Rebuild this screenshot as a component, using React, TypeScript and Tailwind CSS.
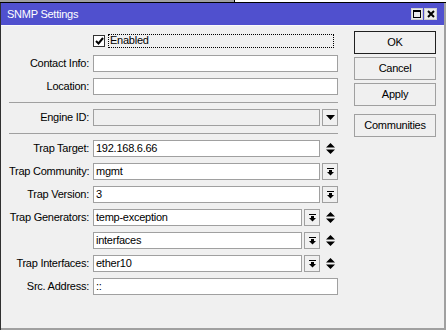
import type { ReactNode } from "react";

const UpDown = () => (
  <svg width="9" height="11" viewBox="0 0 9 11">
    <path d="M0 4.5 L4.5 0 L9 4.5Z M0 6.5 L9 6.5 L4.5 11Z" fill="#000" />
  </svg>
);

const BarDown = () => (
  <svg width="7" height="8" viewBox="0 0 7 8">
    <rect x="0" y="0" width="7" height="1" fill="#000" />
    <rect x="2" y="2" width="3" height="2" fill="#000" />
    <path d="M0 4 L7 4 L3.5 7.5Z" fill="#000" />
  </svg>
);

const DropDown = () => (
  <svg width="9" height="5" viewBox="0 0 9 5">
    <path d="M0 0 L9 0 L4.5 5Z" fill="#000" />
  </svg>
);

function Row({ label, children }: { label?: string; children: ReactNode }) {
  return (
    <div className="flex h-[17px] items-center">
      <div className="w-[80px] text-right whitespace-nowrap">{label ? `${label}:` : ""}</div>
      <div className="ml-[4px] flex h-full flex-1">{children}</div>
    </div>
  );
}

function Field({ value, disabled }: { value?: string; disabled?: boolean }) {
  return (
    <div
      className={`flex h-full flex-1 items-center border border-[#a0a0a0] px-[2px] leading-none ${
        disabled ? "bg-[#f0f0f0]" : "bg-white"
      }`}
    >
      {value}
    </div>
  );
}

function SmallBtn({ children }: { children: ReactNode }) {
  return (
    <div className="h-full w-[18px] pl-[2px]">
      <div className="flex h-full items-center justify-center border border-[#a0a0a0] bg-[#f0f0f0]">
        {children}
      </div>
    </div>
  );
}

function Arrows() {
  return (
    <div className="flex h-full w-[18px] items-center justify-center pl-[3px]">
      <UpDown />
    </div>
  );
}

function Sep() {
  return <div className="h-[2px] border-b border-[#a0a0a0]" />;
}

function Btn({ children, def, className = "" }: { children: ReactNode; def?: boolean; className?: string }) {
  return (
    <div
      className={`flex h-[23px] items-center justify-center border bg-[#f0f0f0] ${
        def ? "border-[#202020]" : "border-[#a0a0a0]"
      } ${className}`}
    >
      {children}
    </div>
  );
}

export default function App() {
  return (
    <div className="flex h-[330px] w-[446px] flex-col overflow-hidden bg-white font-['Liberation_Sans',Arial,sans-serif] text-[11px] tracking-[-0.25px] text-black">
      {/* strip of the window behind */}
      <div className="flex h-[3px]">
        <div className="w-[234px] border-b border-black bg-[#a0a0a0]" />
        <div className="w-[1px] bg-black" />
        <div className="flex-1 border-b border-black bg-white" />
      </div>

      <div className="flex flex-1 flex-col border-l border-r-2 border-l-[#303030] border-r-[#a0a0a0]">
        {/* title bar */}
        <div className="flex h-[22px] items-center justify-between bg-[#5050ce] pl-[6px] pr-[7px]">
          <span className="text-white">SNMP Settings</span>
          <div className="flex gap-[1px]">
            <div className="flex h-[12px] w-[12px] items-center justify-center border border-[#d0d0d0] bg-[#ececec]">
              <div className="h-[8px] w-[8px] border border-t-2 border-black" />
            </div>
            <div className="flex h-[12px] w-[13px] items-center justify-center border border-[#d0d0d0] bg-[#ececec]">
              <svg width="8" height="8" viewBox="0 0 8 8">
                <path d="M1 1 L7 7 M7 1 L1 7" stroke="#000" strokeWidth="2" />
              </svg>
            </div>
          </div>
        </div>
        <div className="h-[1px] bg-[#fafafa]" />

        {/* body */}
        <div className="flex flex-1 border-b-2 border-[#a0a0a0] bg-[#f0f0f0] pl-[8px] pr-[7px]">
          <div className="flex w-[329px] flex-col gap-[6px] pt-[6px]">
            <div className="flex h-[17px] items-center">
              <div className="w-[84px]" />
              <div className="flex h-[12px] w-[12px] items-center justify-center border border-[#333] bg-white">
                <svg width="9" height="8" viewBox="0 0 9 8">
                  <path d="M1 4 L3.5 6.5 L8 1" stroke="#000" strokeWidth="2" fill="none" />
                </svg>
              </div>
              <div className="ml-[3px] mr-[4px] flex h-[14px] flex-1 items-center border border-dotted border-black pl-[1px] leading-none">
                Enabled
              </div>
            </div>

            <Row label="Contact Info">
              <Field />
            </Row>
            <Row label="Location">
              <Field />
            </Row>
            <Sep />
            <Row label="Engine ID">
              <Field disabled />
              <SmallBtn>
                <DropDown />
              </SmallBtn>
            </Row>
            <Sep />
            <Row label="Trap Target">
              <Field value="192.168.6.66" />
              <Arrows />
            </Row>
            <Row label="Trap Community">
              <Field value="mgmt" />
              <SmallBtn>
                <BarDown />
              </SmallBtn>
            </Row>
            <Row label="Trap Version">
              <Field value="3" />
              <SmallBtn>
                <BarDown />
              </SmallBtn>
            </Row>
            <Row label="Trap Generators">
              <Field value="temp-exception" />
              <SmallBtn>
                <BarDown />
              </SmallBtn>
              <Arrows />
            </Row>
            <Row>
              <Field value="interfaces" />
              <SmallBtn>
                <BarDown />
              </SmallBtn>
              <Arrows />
            </Row>
            <Row label="Trap Interfaces">
              <Field value="ether10" />
              <SmallBtn>
                <BarDown />
              </SmallBtn>
              <Arrows />
            </Row>
            <Row label="Src. Address">
              <Field value="::" />
            </Row>
          </div>

          <div className="ml-[16px] flex w-[82px] flex-col gap-[3px] pt-[5px]">
            <Btn def>OK</Btn>
            <Btn>Cancel</Btn>
            <Btn>Apply</Btn>
            <Btn className="mt-[5px]">Communities</Btn>
          </div>
        </div>
      </div>
    </div>
  );
}
